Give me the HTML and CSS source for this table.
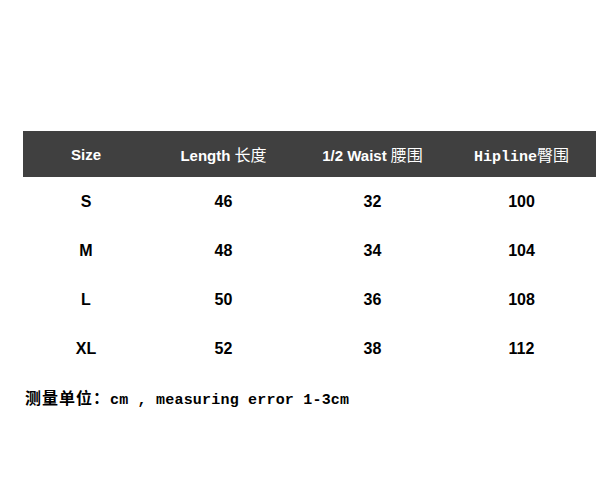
FILE: index.html
```html
<!DOCTYPE html>
<html>
<head>
<meta charset="utf-8">
<link rel="stylesheet" href="styles.css">
</head>
<body>
<div class="page">
  <div class="table">
    <div class="row head">
      <div class="cell">Size</div>
      <div class="cell">Length <span class="cjk">长度</span></div>
      <div class="cell">1/2 Waist <span class="cjk">腰围</span></div>
      <div class="cell"><span class="mono">Hipline</span><span class="cjk">臀围</span></div>
    </div>
    <div class="row data">
      <div class="cell">S</div><div class="cell">46</div><div class="cell">32</div><div class="cell">100</div>
    </div>
    <div class="row data">
      <div class="cell">M</div><div class="cell">48</div><div class="cell">34</div><div class="cell">104</div>
    </div>
    <div class="row data">
      <div class="cell">L</div><div class="cell">50</div><div class="cell">36</div><div class="cell">108</div>
    </div>
    <div class="row data">
      <div class="cell">XL</div><div class="cell">52</div><div class="cell">38</div><div class="cell">112</div>
    </div>
  </div>
  <p class="note"><span class="note-cjk">测量单位：</span><span class="note-mono">cm , measuring error 1-3cm</span></p>
</div>
</body>
</html>
```
FILE: styles.css
```css
html, body {
  margin: 0;
  background: #ffffff;
}
.page {
  padding: 131px 0 0 23px;
}
.table {
  width: 573px;
}
.row {
  display: grid;
  grid-template-columns: 126px 149px 149px 149px;
  align-items: center;
}
.cell {
  text-align: center;
  white-space: nowrap;
}
.head {
  height: 46px;
  background: #404040;
  color: #ffffff;
  font-family: "Liberation Sans", Arial, sans-serif;
  font-weight: bold;
  font-size: 15px;
}
.head .cjk {
  font-family: "Noto Sans CJK SC", sans-serif;
  font-weight: normal;
  font-size: 16px;
}
.head .mono {
  font-family: "Liberation Mono", monospace;
  font-weight: bold;
  font-size: 15px;
}
.data {
  height: 49px;
  color: #000000;
  font-family: "Liberation Sans Narrow", "Liberation Sans", Arial, sans-serif;
  font-weight: bold;
  font-size: 16px;
}
.note {
  margin: 14px 0 0 2px;
  line-height: 20px;
  color: #000000;
  font-weight: bold;
}
.note-cjk {
  font-family: "Noto Sans CJK SC", sans-serif;
  font-size: 16px;
  letter-spacing: 1px;
}
.note-mono {
  font-family: "Liberation Mono", monospace;
  font-size: 15px;
  letter-spacing: 0.2px;
}
```
